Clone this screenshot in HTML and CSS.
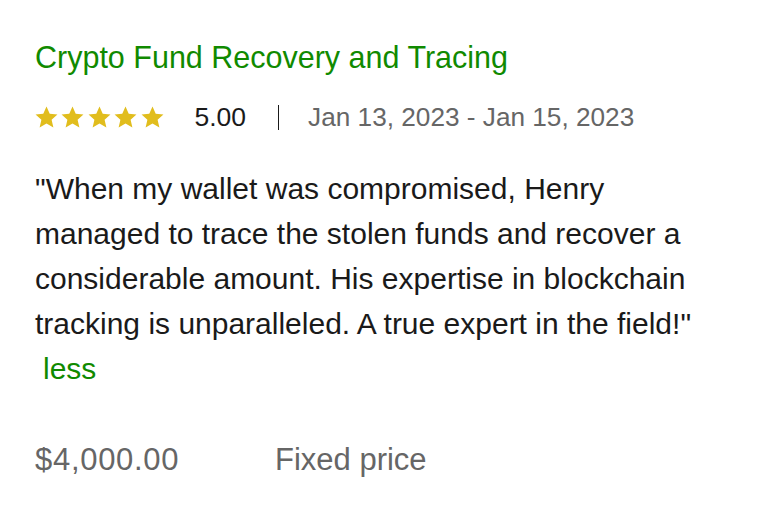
FILE: index.html
```html
<!DOCTYPE html>
<html>
<head>
<meta charset="utf-8">
<link rel="stylesheet" href="styles.css">
</head>
<body>
<div class="card">
  <h2 class="title">Crypto Fund Recovery and Tracing</h2>
  <div class="meta">
    <div class="stars">
      <svg viewBox="0 0 24 24" class="star"><path d="M12 1.5l3.1 6.9 7.4.7-5.6 5 1.7 7.4L12 17.7l-6.6 3.8 1.7-7.4-5.6-5 7.4-.7z"/></svg>
      <svg viewBox="0 0 24 24" class="star"><path d="M12 1.5l3.1 6.9 7.4.7-5.6 5 1.7 7.4L12 17.7l-6.6 3.8 1.7-7.4-5.6-5 7.4-.7z"/></svg>
      <svg viewBox="0 0 24 24" class="star"><path d="M12 1.5l3.1 6.9 7.4.7-5.6 5 1.7 7.4L12 17.7l-6.6 3.8 1.7-7.4-5.6-5 7.4-.7z"/></svg>
      <svg viewBox="0 0 24 24" class="star"><path d="M12 1.5l3.1 6.9 7.4.7-5.6 5 1.7 7.4L12 17.7l-6.6 3.8 1.7-7.4-5.6-5 7.4-.7z"/></svg>
      <svg viewBox="0 0 24 24" class="star"><path d="M12 1.5l3.1 6.9 7.4.7-5.6 5 1.7 7.4L12 17.7l-6.6 3.8 1.7-7.4-5.6-5 7.4-.7z"/></svg>
    </div>
    <span class="score">5.00</span>
    <span class="divider"></span>
    <span class="dates">Jan 13, 2023 - Jan 15, 2023</span>
  </div>
  <p class="review">"When my wallet was compromised, Henry managed to trace the stolen funds and recover a considerable amount. His expertise in blockchain tracking is unparalleled. A true expert in the field!" <a class="less" href="#">less</a></p>
  <div class="price-row">
    <span class="price">$4,000.00</span>
    <span class="type">Fixed price</span>
  </div>
</div>
</body>
</html>
```
FILE: styles.css
```css
* { box-sizing: border-box; }
body {
  margin: 0;
  background: #fff;
  font-family: "Liberation Sans", Arial, sans-serif;
}
.card {
  padding: 37px 35px 0 35px;
  width: 757px;
}
.title {
  margin: 0;
  font-size: 30.5px;
  font-weight: 400;
  color: #108a00;
  line-height: 40px;
}
.meta {
  display: flex;
  align-items: center;
  margin-top: 25px;
  height: 30px;
}
.stars {
  display: flex;
  gap: 1.5px;
  margin-left: -1.5px;
}
.star {
  width: 25px;
  height: 25px;
  fill: #e1bd1d;
}
.score {
  margin-left: 30px;
  font-size: 26.5px;
  color: #1a1a1a;
}
.divider {
  width: 1px;
  height: 25px;
  background: #1a1a1a;
  margin: 0 29px 0 32px;
}
.dates {
  font-size: 26.2px;
  color: #666666;
}
.review {
  margin: 34px 0 0 0;
  font-size: 30px;
  line-height: 45px;
  color: #1a1a1a;
  letter-spacing: 0;
  width: 665px;
}
.less {
  display: block;
  color: #108a00;
  text-decoration: none;
  margin-left: 8px;
}
.price-row {
  display: flex;
  margin-top: 49px;
  font-size: 31px;
  line-height: 40px;
  color: #666666;
}
.price {
  width: 240px;
  letter-spacing: 0.7px;
}
```
